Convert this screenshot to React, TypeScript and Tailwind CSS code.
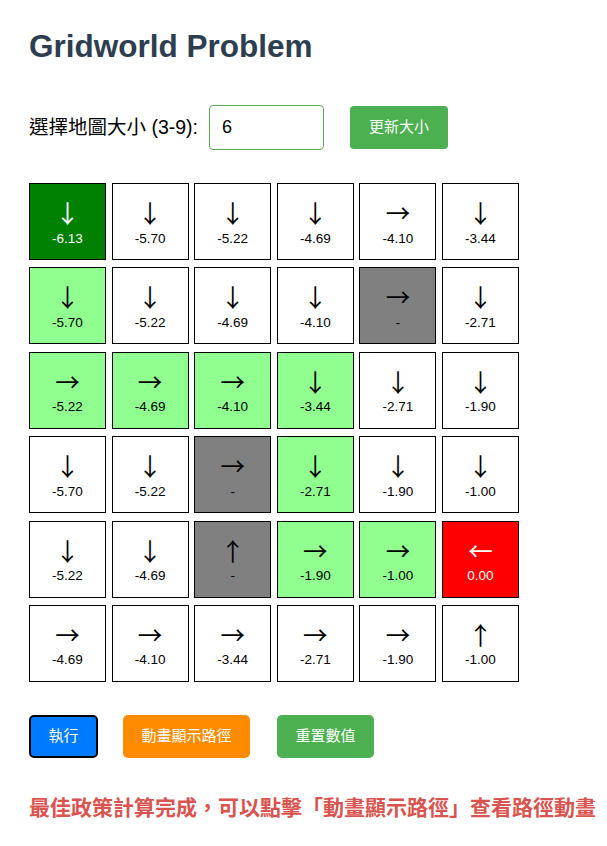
import React from "react";

type Cell = { a: string; v: string; bg?: string };

const W = "bg-white";
const LG = "bg-[#90ff90]";
const DG = "bg-[#008000]";
const GR = "bg-[#808080]";
const RD = "bg-[#ff0000]";

const grid: Cell[][] = [
  [
    { a: "↓", v: "-6.13", bg: DG },
    { a: "↓", v: "-5.70" },
    { a: "↓", v: "-5.22" },
    { a: "↓", v: "-4.69" },
    { a: "→", v: "-4.10" },
    { a: "↓", v: "-3.44" },
  ],
  [
    { a: "↓", v: "-5.70", bg: LG },
    { a: "↓", v: "-5.22" },
    { a: "↓", v: "-4.69" },
    { a: "↓", v: "-4.10" },
    { a: "→", v: "-", bg: GR },
    { a: "↓", v: "-2.71" },
  ],
  [
    { a: "→", v: "-5.22", bg: LG },
    { a: "→", v: "-4.69", bg: LG },
    { a: "→", v: "-4.10", bg: LG },
    { a: "↓", v: "-3.44", bg: LG },
    { a: "↓", v: "-2.71" },
    { a: "↓", v: "-1.90" },
  ],
  [
    { a: "↓", v: "-5.70" },
    { a: "↓", v: "-5.22" },
    { a: "→", v: "-", bg: GR },
    { a: "↓", v: "-2.71", bg: LG },
    { a: "↓", v: "-1.90" },
    { a: "↓", v: "-1.00" },
  ],
  [
    { a: "↓", v: "-5.22" },
    { a: "↓", v: "-4.69" },
    { a: "↑", v: "-", bg: GR },
    { a: "→", v: "-1.90", bg: LG },
    { a: "→", v: "-1.00", bg: LG },
    { a: "←", v: "0.00", bg: RD },
  ],
  [
    { a: "→", v: "-4.69" },
    { a: "→", v: "-4.10" },
    { a: "→", v: "-3.44" },
    { a: "→", v: "-2.71" },
    { a: "→", v: "-1.90" },
    { a: "↑", v: "-1.00" },
  ],
];

function GridCell({ cell }: { cell: Cell }) {
  const light = cell.bg === DG || cell.bg === RD;
  return (
    <div
      className={`flex h-[77px] w-[77px] flex-col items-center border border-black pt-[17px] ${cell.bg ?? W} ${
        light ? "text-white" : "text-black"
      }`}
    >
      <div className="font-['Noto_Sans_CJK_TC',sans-serif] text-[24.5px] leading-none">{cell.a}</div>
      <div className="mt-[4px] text-[13.5px] leading-[18px]">{cell.v}</div>
    </div>
  );
}

export default function App() {
  return (
    <div className="min-h-[846px] bg-white pl-[29px] pt-[27px] font-['Liberation_Sans','Noto_Sans_CJK_TC',sans-serif]">
      <h1 className="text-[31.5px] font-bold leading-[38px] text-[#2c3e50]">Gridworld Problem</h1>

      {/* size selector */}
      <div className="mt-[40px] flex items-center">
        <label className="text-[19.5px] text-black">選擇地圖大小 (3-9):</label>
        <input
          type="number"
          defaultValue={6}
          className="ml-[11px] h-[45px] w-[115px] rounded-[4px] border border-[#5ea85e] px-[12px] text-[18px] text-black outline-none"
        />
        <button className="ml-[26px] h-[43px] rounded-[4px] bg-[#4caf50] px-[19px] text-[15px] text-white">
          更新大小
        </button>
      </div>

      {/* grid */}
      <div className="mt-[33px] flex w-[490px] flex-col gap-y-[7.4px]">
        {grid.map((row, r) => (
          <div key={r} className="flex justify-between">
            {row.map((c, i) => (
              <GridCell key={i} cell={c} />
            ))}
          </div>
        ))}
      </div>

      {/* actions */}
      <div className="mt-[33px] flex items-center gap-[25px]">
        <button className="h-[43px] rounded-[5px] border-2 border-black bg-[#007bff] px-[17.5px] text-[15px] text-white">
          執行
        </button>
        <button className="h-[43px] rounded-[5px] bg-[#ff8c00] px-[18.5px] text-[15px] text-white">
          動畫顯示路徑
        </button>
        <button className="ml-[2px] h-[43px] rounded-[5px] bg-[#4caf50] px-[18.5px] text-[15px] text-white">
          重置數值
        </button>
      </div>

      <p className="mt-[34px] whitespace-nowrap text-[21px] font-bold text-[#d9534f]">
        最佳政策計算完成，可以點擊「動畫顯示路徑」查看路徑動畫
      </p>
    </div>
  );
}
